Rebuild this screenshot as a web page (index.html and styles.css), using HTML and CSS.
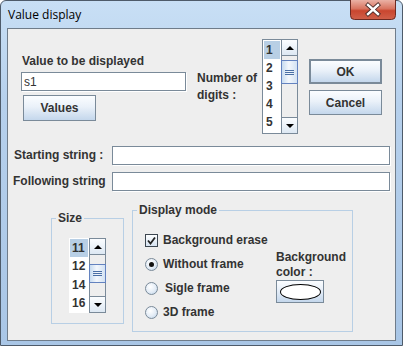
FILE: index.html
```html
<!DOCTYPE html>
<html lang="en">
<head>
  <meta charset="UTF-8">
  <title>Value display</title>
  <link rel="stylesheet" href="styles.css">
</head>
<body>

  <div class="window">

    <!-- Title bar -->
    <div class="titlebar">
      <span class="title">Value display</span>
      <div class="close-btn">
        <svg width="46" height="20" viewBox="0 0 46 20">
          <defs>
            <linearGradient id="red" x1="0" y1="0" x2="0" y2="1">
              <stop offset="0" stop-color="#eab1a5"/>
              <stop offset="0.45" stop-color="#d8735f"/>
              <stop offset="0.55" stop-color="#c9462f"/>
              <stop offset="1" stop-color="#d0604a"/>
            </linearGradient>
          </defs>
          <path d="M0.5 0 V15.5 Q0.5 19.5 4.5 19.5 H41.5 Q45.5 19.5 45.5 15.5 V0" fill="url(#red)" stroke="#6d2a22"/>
          <path d="M18 5 L28 14 M28 5 L18 14" stroke="#4a2a28" stroke-width="4.2" stroke-linecap="square"/>
          <path d="M18 5 L28 14 M28 5 L18 14" stroke="#fff" stroke-width="2.4" stroke-linecap="square"/>
        </svg>
      </div>
    </div>

    <!-- Dialog body -->
    <div class="content">

      <div class="top-row">
        <div class="value-col">
          <label class="lbl">Value to be displayed</label>
          <input class="field value-field" type="text" value="s1">
          <button class="btn values-btn">Values</button>
        </div>
        <div class="lbl digits-label">Number of<br>digits :</div>
        <div class="listbox digits-list">
          <ul class="items">
            <li class="sel">1</li>
            <li>2</li>
            <li>3</li>
            <li>4</li>
            <li>5</li>
          </ul>
          <div class="vscroll">
            <div class="arrow-btn"><span class="arrow up"></span></div>
            <div class="track digits-track"><div class="thumb"><span class="grip"></span></div></div>
            <div class="arrow-btn"><span class="arrow down"></span></div>
          </div>
        </div>
        <div class="btn-col">
          <button class="btn default-btn">OK</button>
          <button class="btn">Cancel</button>
        </div>
      </div>

      <div class="string-row first">
        <span class="lbl string-label">Starting string :</span>
        <input class="field string-field" type="text">
      </div>
      <div class="string-row">
        <span class="lbl string-label following">Following string</span>
        <input class="field string-field" type="text">
      </div>

      <div class="bottom-row">
        <fieldset class="group size-group">
          <legend>Size</legend>
          <div class="listbox size-list">
            <ul class="items">
              <li class="sel">11</li>
              <li>12</li>
              <li>14</li>
              <li>16</li>
            </ul>
            <div class="vscroll">
              <div class="arrow-btn"><span class="arrow up"></span></div>
              <div class="track size-track"><div class="thumb"><span class="grip"></span></div></div>
              <div class="arrow-btn"><span class="arrow down"></span></div>
            </div>
          </div>
        </fieldset>

        <fieldset class="group mode-group">
          <legend>Display mode</legend>
          <div class="mode-body">
            <div class="mode-options">
              <div class="option">
                <span class="checkbox">
                  <svg width="9" height="9" viewBox="0 0 9 9"><path d="M1 4.5 L3.5 7.5 L8 1.5" fill="none" stroke="#222" stroke-width="1.8"/></svg>
                </span>
                <span class="lbl">Background erase</span>
              </div>
              <div class="option">
                <span class="radio checked"></span>
                <span class="lbl">Without frame</span>
              </div>
              <div class="option">
                <span class="radio"></span>
                <span class="lbl sigle">Sigle frame</span>
              </div>
              <div class="option">
                <span class="radio"></span>
                <span class="lbl">3D frame</span>
              </div>
            </div>
            <div class="bg-col">
              <div class="lbl">Background<br>color :</div>
              <div class="color-btn"><span class="swatch"></span></div>
            </div>
          </div>
        </fieldset>
      </div>

    </div>
  </div>

</body>
</html>
```

FILE: styles.css
```css
* {
  box-sizing: border-box;
  margin: 0;
  padding: 0;
}

body {
  background: #fff;
  font-family: "Liberation Sans", Arial, sans-serif;
  color: #333;
}

.window {
  width: 403px;
  height: 346px;
  border: 1px solid #4e5b6a;
  border-radius: 6px 6px 0 0;
  background: linear-gradient(#c8dff5, #b6d0ec 30%, #a9c6e6);
  padding: 0 6px;
}

/* Title bar */
.titlebar {
  height: 27px;
  display: flex;
  align-items: flex-start;
}

.title {
  font-family: "Open Sans", "Noto Sans", sans-serif;
  font-size: 12px;
  line-height: 15px;
  color: #000;
  margin: 6px 0 0 1px;
}

.close-btn {
  margin: -1px 0 0 auto;
  width: 46px;
  height: 20px;
}

.close-btn svg {
  display: block;
}

/* Content panel */
.content {
  height: 313px;
  background: #eeeeee;
  border: 1px solid #6f7c8a;
}

.lbl {
  font-size: 12px;
  font-weight: bold;
  line-height: 15px;
  color: #333;
}

.field {
  height: 19px;
  border: 1px solid #7a8a99;
  box-shadow: 1px 1px 0 #fff;
  background: #fff;
  font-family: "Liberation Sans", Arial, sans-serif;
  font-size: 12px;
  color: #333;
  padding: 0 2px;
  outline: none;
}

.btn {
  width: 73px;
  height: 25px;
  border: 1px solid #7a8a99;
  background: linear-gradient(#fbfdff 0%, #eaf1f9 45%, #c4d7ec 100%);
  font-family: "Liberation Sans", Arial, sans-serif;
  font-size: 12px;
  font-weight: bold;
  color: #333;
}

/* Top area */
.top-row {
  display: flex;
  align-items: flex-start;
}

.value-col {
  width: 165px;
  margin: 25px 0 0 13px;
  display: flex;
  flex-direction: column;
  align-items: flex-start;
}

.value-col .lbl {
  margin: 0 0 3px 1px;
}

.value-field {
  width: 165px;
}

.values-btn {
  height: 26px;
  margin: 4px 0 0 2px;
}

.digits-label {
  width: 65px;
  margin: 41px 0 0 11px;
  line-height: 17px;
}

.btn-col {
  display: flex;
  flex-direction: column;
  gap: 6px;
  margin: 30px 0 0 11px;
}

.default-btn {
  border: 2px solid #7a8a99;
}

/* Lists */
.listbox {
  display: flex;
  background: #fff;
}

.items {
  list-style: none;
  flex: 1;
  padding: 1px;
  overflow: hidden;
}

.items li {
  height: 18px;
  line-height: 18px;
  font-size: 12px;
  font-weight: bold;
  color: #333;
  padding-left: 1px;
}

.items li.sel {
  background: #b8cfe5;
}

.digits-list {
  width: 36px;
  height: 95px;
  margin-top: 10px;
  border: 1px solid #7a8a99;
  border-right: none;
}

.digits-list .items li {
  padding-left: 2px;
}

.vscroll {
  width: 17px;
  display: flex;
  flex-direction: column;
  background: #eeeeee;
  border: 1px solid #7a8a99;
}

.digits-list .vscroll {
  margin: -1px 0;
}

.arrow-btn {
  height: 16px;
  display: flex;
  align-items: center;
  justify-content: center;
  background: linear-gradient(#fbfdff, #dde8f3);
  border-bottom: 1px solid #7a8a99;
}

.arrow-btn:last-child {
  border-bottom: none;
  border-top: 1px solid #7a8a99;
}

.arrow {
  width: 0;
  height: 0;
  border-left: 4px solid transparent;
  border-right: 4px solid transparent;
}

.arrow.up {
  border-bottom: 4px solid #000;
}

.arrow.down {
  border-top: 4px solid #000;
}

.track {
  flex: 1;
}

.thumb {
  height: 24px;
  margin: 4px -1px 0 -1px;
  border: 1px solid #6382bf;
  background: linear-gradient(90deg, #c7dbf0, #f3f7fc 45%, #d3e2f3);
  display: flex;
  align-items: center;
  justify-content: center;
}

.size-track .thumb {
  height: 19px;
  margin-top: 9px;
}

.grip {
  width: 9px;
  height: 5px;
  background: linear-gradient(#4a6fa5 0 1px, transparent 1px 2px, #4a6fa5 2px 3px, transparent 3px 4px, #4a6fa5 4px 5px);
}

/* String rows */
.string-row {
  display: flex;
  align-items: center;
  padding-left: 6px;
  margin-top: 7px;
}

.string-row.first {
  margin-top: 12px;
}

.string-label {
  width: 98px;
}

.string-label.following {
  margin-left: -1px;
  width: 99px;
}

.string-field {
  width: 278px;
}

/* Bottom groups */
.bottom-row {
  display: flex;
  align-items: flex-start;
  margin-top: 12px;
  padding-left: 43px;
}

.group {
  border: 1px solid #b8cfe5;
  padding: 0 4px;
  min-width: 0;
}

.group legend {
  font-size: 12px;
  font-weight: bold;
  line-height: 15px;
  color: #333;
  padding: 0 2px;
}

.size-group {
  width: 73px;
  height: 113px;
  margin-top: 8px;
}

.size-list {
  width: 37px;
  height: 75px;
  margin: 12px 0 0 13px;
}

.size-list .items li {
  height: 18.3px;
  line-height: 18px;
  padding-left: 2px;
}

.mode-group {
  width: 221px;
  height: 129px;
  margin-left: 8px;
}

.mode-body {
  display: flex;
  align-items: flex-start;
}

.mode-options {
  width: 131px;
  margin: 10px 0 0 8px;
}

.option {
  height: 24px;
  display: flex;
  align-items: center;
  gap: 5px;
}

.checkbox {
  width: 13px;
  height: 13px;
  border: 1px solid #3c4650;
  background: linear-gradient(#fdfeff, #d6e3f1);
  display: flex;
  align-items: center;
  justify-content: center;
}

.checkbox svg {
  display: block;
}

.radio {
  width: 13px;
  height: 13px;
  border-radius: 50%;
  border: 1px solid #7a8a99;
  background: radial-gradient(circle at 40% 35%, #ffffff, #e3ecf6 55%, #b8cfe5);
  display: flex;
  align-items: center;
  justify-content: center;
}

.radio.checked::after {
  content: "";
  width: 5px;
  height: 5px;
  border-radius: 50%;
  background: #111;
}

.sigle {
  margin-left: 2px;
}

.bg-col {
  margin-top: 32px;
}

.color-btn {
  width: 48px;
  height: 23px;
  border: 1px solid #7a8a99;
  background: linear-gradient(#fbfdff, #e6eef8 45%, #c4d7ec);
  display: flex;
  align-items: center;
  justify-content: center;
}

.swatch {
  width: 41px;
  height: 16px;
  border-radius: 50%;
  border: 1px solid #000;
  background: #fff;
}
```
